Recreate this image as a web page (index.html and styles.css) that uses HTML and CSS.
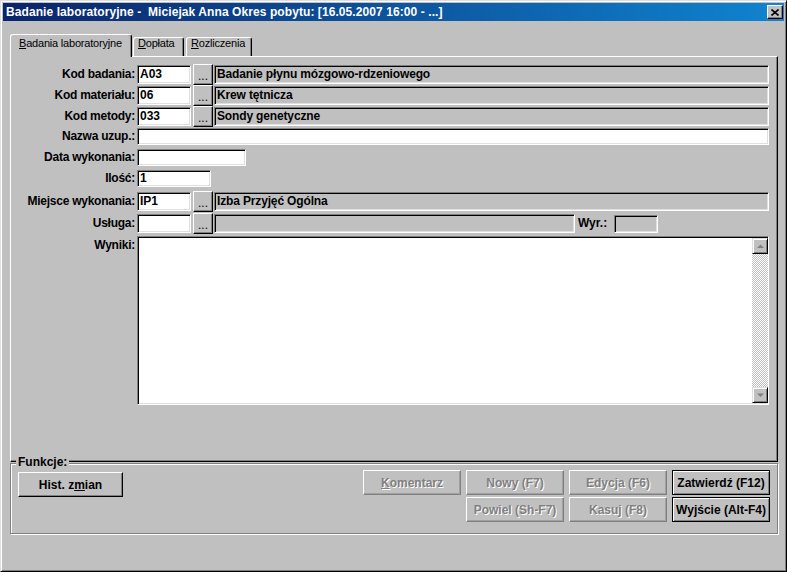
FILE: index.html
```html
<!DOCTYPE html>
<html lang="pl">
<head>
<meta charset="utf-8">
<title>Badanie laboratoryjne</title>
<link rel="stylesheet" href="styles.css">
</head>
<body>
<div class="window">
  <div class="titlebar">
    <span class="title">Badanie laboratoryjne -  Miciejak Anna Okres pobytu: [16.05.2007 16:00 - ...]</span>
    <span class="close"><svg width="8" height="7" viewBox="0 0 8 7"><path d="M0.5 0.5 L7.5 6.5 M7.5 0.5 L0.5 6.5" stroke="#000" stroke-width="1.6" fill="none"/></svg></span>
  </div>
  <div class="client">
    <div class="tabs">
      <div class="tab active"><u>B</u>adania laboratoryjne</div>
      <div class="tab t-dop"><u>D</u>opłata</div>
      <div class="tab t-roz"><u>R</u>ozliczenia</div>
    </div>
    <div class="panel">
      <div class="row">
        <span class="lbl">Kod badania:</span>
        <span class="field sunken code">A03</span>
        <span class="dots">...</span>
        <span class="desc sunken">Badanie płynu mózgowo-rdzeniowego</span>
      </div>
      <div class="row">
        <span class="lbl">Kod materiału:</span>
        <span class="field sunken code">06</span>
        <span class="dots">...</span>
        <span class="desc sunken">Krew tętnicza</span>
      </div>
      <div class="row">
        <span class="lbl">Kod metody:</span>
        <span class="field sunken code">033</span>
        <span class="dots">...</span>
        <span class="desc sunken">Sondy genetyczne</span>
      </div>
      <div class="row short">
        <span class="lbl">Nazwa uzup.:</span>
        <span class="field sunken grow"></span>
      </div>
      <div class="row short">
        <span class="lbl">Data wykonania:</span>
        <span class="field sunken date"></span>
      </div>
      <div class="row short tall">
        <span class="lbl">Ilość:</span>
        <span class="field sunken qty">1</span>
      </div>
      <div class="row tall">
        <span class="lbl">Miejsce wykonania:</span>
        <span class="field sunken code">IP1</span>
        <span class="dots">...</span>
        <span class="desc sunken">Izba Przyjęć Ogólna</span>
      </div>
      <div class="row tall">
        <span class="lbl">Usługa:</span>
        <span class="field sunken code"></span>
        <span class="dots">...</span>
        <span class="desc sunken narrow"></span>
        <span class="wyr-lbl">Wyr.:</span>
        <span class="wyr sunken"></span>
      </div>
      <div class="row memo-row">
        <span class="lbl">Wyniki:</span>
        <div class="memo sunken">
          <div class="sb">
            <span class="sbtn"><svg width="7" height="5" viewBox="0 0 7 5"><polygon points="3.5,0.5 7,4 0,4" fill="#808080"/></svg></span>
            <span class="sbtn down"><svg width="7" height="5" viewBox="0 0 7 5"><polygon points="0,0.5 7,0.5 3.5,4" fill="#808080"/></svg></span>
          </div>
        </div>
      </div>
    </div>
    <div class="group">
      <span class="legend">Funkcje:</span>
      <span class="btn hist">Hist. z<u>m</u>ian</span>
      <div class="btn-grid">
        <span class="btn dis"><u>K</u>omentarz</span>
        <span class="btn dis">Nowy (F7)</span>
        <span class="btn dis">Edycja (F6)</span>
        <span class="btn def">Zatwierdź (F12)</span>
        <span class="btn dis c2">Powiel (Sh-F7)</span>
        <span class="btn dis">Kasuj (F8)</span>
        <span class="btn def">Wyjście (Alt-F4)</span>
      </div>
    </div>
  </div>
</div>
</body>
</html>
```
FILE: styles.css
```css
* { box-sizing: border-box; }
body {
  margin: 0;
  background: #c0c0c0;
  font-family: "Liberation Sans", Arial, sans-serif;
  font-size: 12px;
  color: #000;
}
.window {
  width: 787px;
  height: 572px;
  background: #c0c0c0;
  border: 1px solid;
  border-color: #dfdfdf #000 #000 #dfdfdf;
  box-shadow: inset 1px 1px 0 #fff, inset -1px -1px 0 #808080;
  padding: 2px;
  display: flex;
  flex-direction: column;
}
.titlebar {
  height: 18px;
  flex: none;
  display: flex;
  align-items: center;
  padding-left: 3px;
  background: linear-gradient(90deg, #0a246a 0%, #1084d0 100%);
  color: #fff;
  font-weight: bold;
  font-size: 12px;
}
.title { white-space: pre; letter-spacing: 0.08px; }
.close {
  margin-left: auto;
  margin-right: 1px;
  width: 16px;
  height: 14px;
  background: #c0c0c0;
  border: 1px solid;
  border-color: #fff #000 #000 #fff;
  box-shadow: inset -1px -1px 0 #808080;
  display: flex;
  align-items: center;
  justify-content: center;
}
.close svg { display: block; }
.client {
  flex: 1;
  padding: 13px 6px 0 7px;
  display: flex;
  flex-direction: column;
}
.tabs {
  height: 22px;
  flex: none;
  display: flex;
  align-items: flex-end;
  position: relative;
  z-index: 1;
}
.tab {
  height: 19px;
  font-size: 11px;
  letter-spacing: -0.2px;
  line-height: 11px;
  padding: 0 0 0 4px;
  border: 1px solid;
  border-bottom: 0;
  border-color: #fff #000 #000 #fff;
  box-shadow: inset -1px 0 0 #808080;
  border-radius: 3px 3px 0 0;
  background: #c0c0c0;
  white-space: nowrap;
}
.tab.active {
  width: 122px;
  height: 23px;
  margin-bottom: -1px;
  padding-top: 3px;
  padding-left: 8px;
}
.t-dop { width: 51px; margin-left: 1px; }
.t-roz { width: 66px; margin-left: 2px; }
.panel {
  height: 406px;
  flex: none;
  border: 1px solid;
  border-color: #fff #000 #000 #fff;
  box-shadow: inset -1px -1px 0 #808080;
  padding: 8px 8px 0 0;
}
.row {
  display: flex;
  align-items: flex-start;
  height: 21px;
}
.row.tall { height: 22px; }
.lbl {
  flex: none;
  width: 124px;
  margin-right: 2px;
  text-align: right;
  font-weight: bold;
  letter-spacing: -0.25px;
  line-height: 19px;
  white-space: nowrap;
}
.row.short .lbl { line-height: 17px; }
.sunken {
  border: 1px solid;
  border-color: #808080 #fff #fff #808080;
  box-shadow: inset 1px 1px 0 #000, inset -1px -1px 0 #dfdfdf;
}
.field {
  flex: none;
  height: 19px;
  background: #fff;
  padding: 0 2px;
  font-weight: bold;
  line-height: 17px;
}
.row.short .field { height: 17px; line-height: 15px; }
.code { width: 54px; }
.date { width: 109px; }
.qty { width: 74px; }
.field.grow { flex: 1; }
.dots {
  flex: none;
  width: 20px;
  height: 21px;
  margin: -1px 1px 0 2px;
  border: 1px solid;
  border-color: #fff #000 #000 #fff;
  box-shadow: inset -1px -1px 0 #808080;
  background: #c0c0c0;
  text-align: center;
  line-height: 22px;
}
.desc {
  flex: 1;
  height: 19px;
  background: #c0c0c0;
  padding-left: 2px;
  line-height: 17px;
  font-weight: bold;
  letter-spacing: -0.15px;
  white-space: nowrap;
  overflow: hidden;
}
.desc.narrow { flex: none; width: 361px; }
.wyr-lbl {
  flex: none;
  width: 33px;
  margin-left: 3px;
  font-weight: bold;
  line-height: 19px;
}
.wyr {
  flex: none;
  width: 44px;
  height: 18px;
  margin: 1px 0 0 3px;
  background: #c0c0c0;
}
.memo-row { height: 169px; }
.memo {
  flex: 1;
  height: 169px;
  background: #fff;
  padding: 1px 0 1px 1px;
  display: flex;
  justify-content: flex-end;
}
.sb {
  width: 16px;
  display: flex;
  flex-direction: column;
  background: repeating-conic-gradient(#c0c0c0 0 25%, #fff 0 50%) 0 0 / 2px 2px;
}
.sbtn {
  height: 16px;
  flex: none;
  background: #c0c0c0;
  border: 1px solid;
  border-color: #dfdfdf #000 #000 #dfdfdf;
  box-shadow: inset 1px 1px 0 #fff, inset -1px -1px 0 #808080;
  display: flex;
  align-items: center;
  justify-content: center;
}
.sbtn svg { display: block; }
.sbtn.down { margin-top: auto; }
.group {
  position: relative;
  margin-top: 1px;
  height: 71px;
  flex: none;
  border: 1px solid #808080;
  box-shadow: inset 1px 1px 0 #fff, 1px 1px 0 #fff;
  padding: 6px 7px 0 7px;
  display: flex;
  align-items: flex-start;
}
.legend {
  position: absolute;
  left: 5px;
  top: -9px;
  padding: 0 2px;
  background: #c0c0c0;
  font-weight: bold;
  line-height: 14px;
}
.btn {
  height: 25px;
  border: 1px solid;
  border-color: #fff #000 #000 #fff;
  box-shadow: inset -1px -1px 0 #808080;
  background: #c0c0c0;
  font-weight: bold;
  display: flex;
  align-items: center;
  justify-content: center;
  white-space: nowrap;
}
.btn.hist { width: 105px; margin-top: 2px; flex: none; }
.btn-grid {
  margin-left: auto;
  display: grid;
  grid-template-columns: repeat(4, 98px);
  column-gap: 5px;
  row-gap: 2px;
}
.btn.dis {
  color: #808080;
  text-shadow: 1px 1px 0 #fff;
  border-color: #fff #808080 #808080 #fff;
  box-shadow: inset -1px -1px 0 #a0a0a0;
}
.btn.def {
  border-color: #000;
  box-shadow: inset 1px 1px 0 #fff, inset -1px -1px 0 #808080;
}
.c2 { grid-column: 2; }
```
